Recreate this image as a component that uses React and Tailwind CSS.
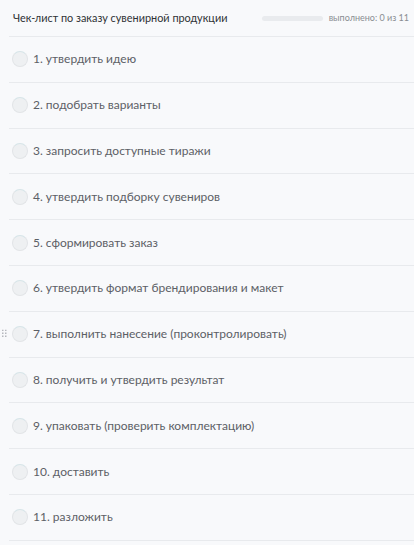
import React from 'react';

const items = [
    '1. утвердить идею',
    '2. подобрать варианты',
    '3. запросить доступные тиражи',
    '4. утвердить подборку сувениров',
    '5. сформировать заказ',
    '6. утвердить формат брендирования и макет',
    '7. выполнить нанесение (проконтролировать)',
    '8. получить и утвердить результат',
    '9. упаковать (проверить комплектацию)',
    '10. доставить',
    '11. разложить',
];

const Handle = () => (
    <svg width="5" height="9" viewBox="0 0 5 9" className="absolute -left-[7px] top-1/2 -translate-y-1/2">
        {[0, 3, 6].map(y => (
            <React.Fragment key={y}>
                <rect x="0" y={y} width="1.5" height="1.5" fill="#b5b8bd" />
                <rect x="3" y={y} width="1.5" height="1.5" fill="#b5b8bd" />
            </React.Fragment>
        ))}
    </svg>
);

const App = () => {
    const done = 0;
    return (
        <div className="w-[414px] h-[545px] overflow-hidden bg-[#f8f9fb] font-['Lato',sans-serif]">
            {/* header */}
            <div className="flex items-center h-[37px] ml-[9px] pl-[4px] pr-[5px] border-b border-[#e8eaed]">
                <div className="text-[10.9px] text-[#2f3235] flex-1 whitespace-nowrap">Чек-лист по заказу сувенирной продукции</div>
                <div className="w-[61px] h-[5px] rounded-full bg-[#e9ebee] mr-[6px]" />
                <div className="text-[9px] text-[#8a8d92] whitespace-nowrap">выполнено: {done} из {items.length}</div>
            </div>
            {items.map((t, i) => (
                <div key={t} className="relative flex items-center h-[45.8px] ml-[9px] pl-[3px] border-b border-[#e8eaed]">
                    {i === 6 && <Handle />}
                    <div className="w-[16px] h-[16px] rounded-full bg-[#eef0f2] border border-[#e2e4e7] border-t-[#d6e4e8] shrink-0" />
                    <span className="ml-[5px] text-[12px] text-[#5c6066] whitespace-nowrap">{t}</span>
                </div>
            ))}
        </div>
    );
};

export default App;
